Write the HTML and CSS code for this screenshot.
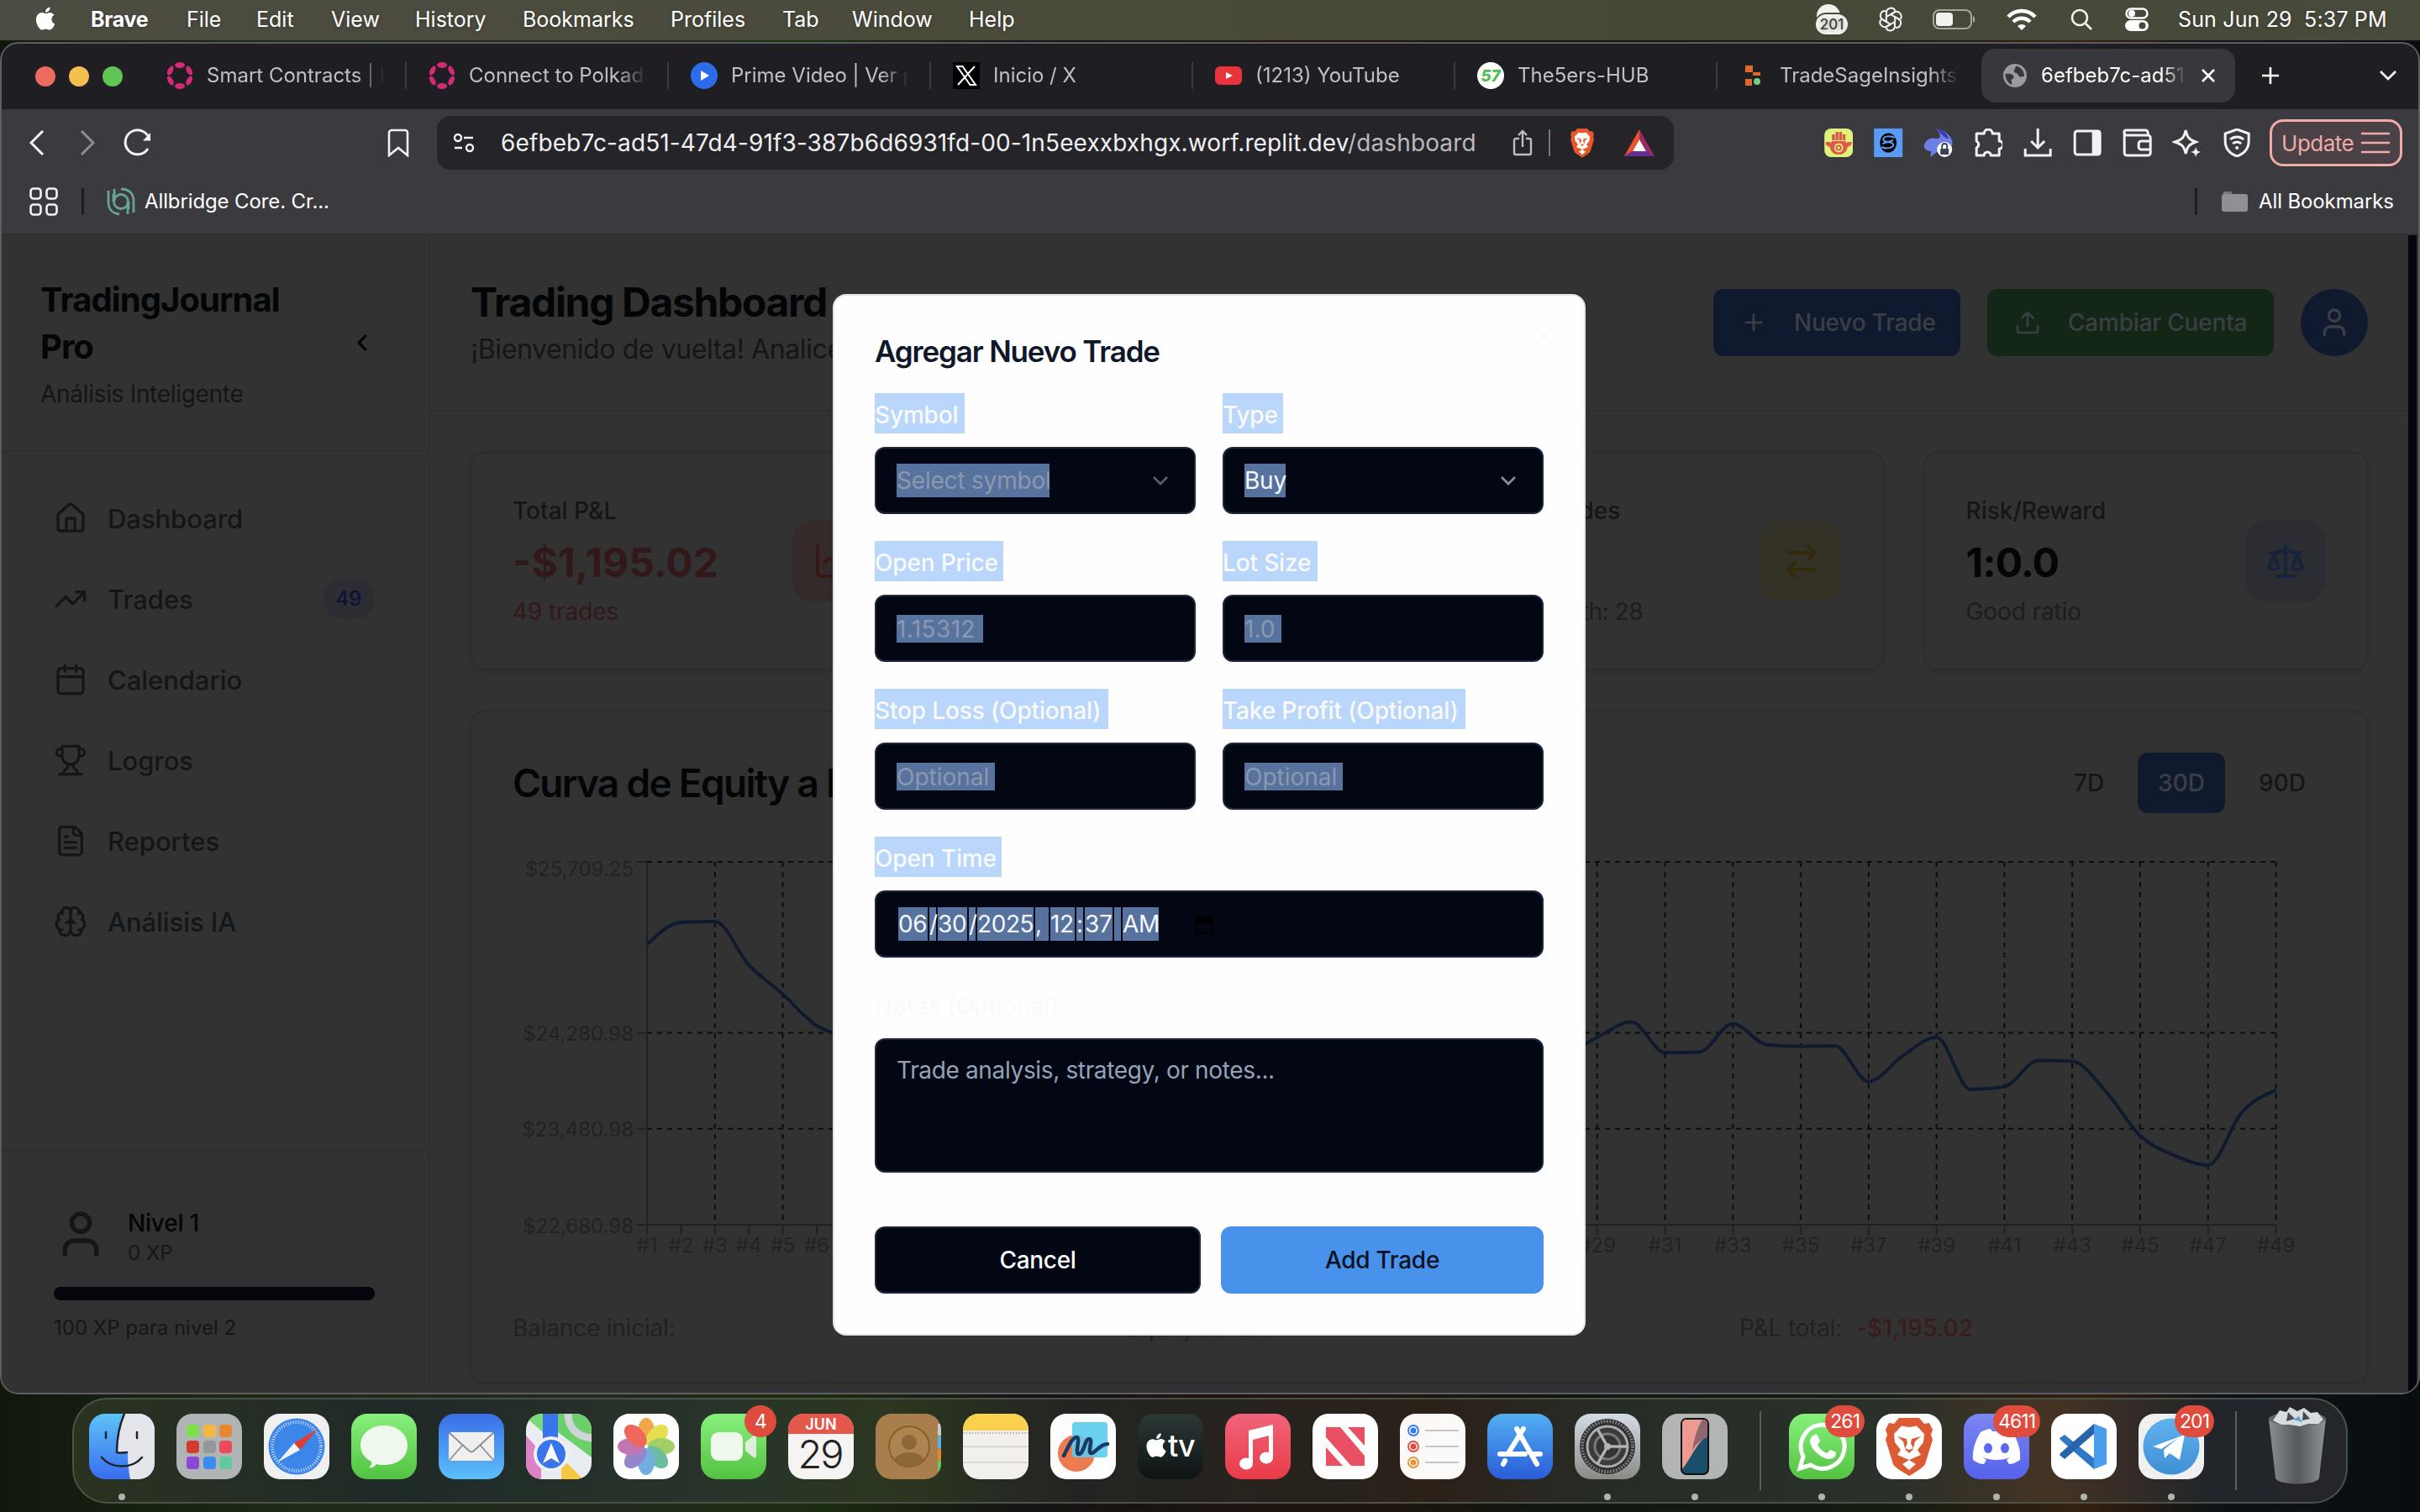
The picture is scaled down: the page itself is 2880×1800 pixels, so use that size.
FILE: index.html
```html
<!DOCTYPE html>
<html lang="es">
<head>
<meta charset="utf-8">
<title>TradingJournal Pro</title>
<link rel="stylesheet" href="styles.css">
</head>
<body>
<svg class="defs" width="0" height="0" aria-hidden="true">
  <defs>
    <symbol id="apple" viewBox="0 0 24 24"><path d="M17.3 12.7c0-2.4 2-3.6 2.1-3.700-1.200-1.700-2.900-1.900-3.500-2-1.500-.1-2.900.9-3.700.9-.8 0-1.900-.9-3.200-.8-1.600 0-3.100.9-4 2.400-1.700 2.900-.4 7.300 1.200 9.700.8 1.200 1.800 2.500 3 2.400 1.200 0 1.700-.8 3.200-.8s1.900.8 3.200.8c1.300 0 2.200-1.200 3-2.300.9-1.400 1.300-2.700 1.300-2.800-.1 0-2.600-1-2.600-3.800zM14.900 5.500c.7-.8 1.100-1.900 1-3.100-1 0-2.200.7-2.800 1.500-.6.7-1.200 1.800-1 2.900 1.100.1 2.200-.5 2.800-1.300z"/></symbol>
    <symbol id="polka" viewBox="0 0 32 32"><g fill="#d52a77"><ellipse cx="16" cy="3.500" rx="6" ry="3.500"/><ellipse cx="16" cy="28.500" rx="6" ry="3.500"/><ellipse cx="4.800" cy="10" rx="3" ry="6" transform="rotate(28 4.800 10)"/><ellipse cx="27.200" cy="10" rx="3" ry="6" transform="rotate(-28 27.200 10)"/><ellipse cx="4.800" cy="22" rx="3" ry="6" transform="rotate(-28 4.800 22)"/><ellipse cx="27.200" cy="22" rx="3" ry="6" transform="rotate(28 27.200 22)"/></g></symbol>
    <symbol id="lion" viewBox="0 0 32 36"><path d="M10 1h12l3 3.500 3-.5 2 4-1 3 1 3-4.500 14.500c-.5 1.500-6 5-9.500 7-3.500-2-9-5.500-9.500-7L2 14l1-3-1-3 2-4 3 .5z"/><path fill="#fff" d="M16 6.500l4.500-.8 4.500 4.800-.5 5-3.500 4.500 2 3-7 3-7-3 2-3L7.500 15.500l-.5-5 4.500-4.800zM16 26l4 2.500-4 3.500-4-3.500z"/><path d="M9 12l5.500 1.500.5 2.500-1.500 3.500L16 22l2.500-2.500L17 16l.5-2.500L23 12l-3.500 3L18.500 19 16 20l-2.500-1L12.500 15z"/></symbol>
    <symbol id="user" viewBox="0 0 24 24"><path d="M19 21v-2a4 4 0 0 0-4-4H9a4 4 0 0 0-4 4v2"/><circle cx="12" cy="7" r="4"/></symbol>
    <symbol id="chev" viewBox="0 0 24 24"><path d="m6 9 6 6 6-6"/></symbol>
  </defs>
</svg>

<div class="desktop">
  <header class="menubar">
    <svg class="apple"><use href="#apple"/></svg>
    <nav class="menus">
      <span class="app">Brave</span><span>File</span><span>Edit</span><span>View</span><span>History</span><span>Bookmarks</span><span>Profiles</span><span>Tab</span><span>Window</span><span>Help</span>
    </nav>
    <div class="status">
      <svg viewBox="0 0 40 36" width="40" height="36"><circle cx="16" cy="14" r="14" fill="#f1f1ee"/><rect x="0" y="10" width="40" height="26" rx="13" fill="#4a4b3d"/><rect x="1" y="12" width="38" height="24" rx="12" fill="#f1f1ee"/><text x="20" y="30" text-anchor="middle" class="tray">201</text></svg>
      <svg class="line knot" viewBox="0 0 30 30" width="30" height="30"><path id="petal" d="M10 12V7a5.500 5.500 0 0 1 10.500-2.200M10 12l5-2.900 6-3.400"/><use href="#petal" transform="rotate(60 15 15)"/><use href="#petal" transform="rotate(120 15 15)"/><use href="#petal" transform="rotate(180 15 15)"/><use href="#petal" transform="rotate(240 15 15)"/><use href="#petal" transform="rotate(300 15 15)"/></svg>
      <svg viewBox="0 0 52 24" width="52" height="24"><rect x="1" y="1" width="45" height="22" rx="7" fill="none" stroke="#a5a69c" stroke-width="2"/><rect x="4" y="4" width="20" height="16" rx="4" fill="#f1f1ee"/><path d="M48 8c3 1 3 7 0 8z" fill="#a5a69c"/></svg>
      <svg viewBox="0 0 36 26" width="36" height="26" fill="none" stroke="#fff" stroke-width="4.500"><path d="M2 10a22 22 0 0 1 32 0"/><path d="M8 16a14 14 0 0 1 20 0"/><path d="M18 26l-5-5a7 7 0 0 1 10 0z" fill="#fff" stroke="none"/></svg>
      <svg class="line search" viewBox="0 0 28 28" width="28" height="28"><circle cx="12" cy="12" r="9"/><path d="M19 19l7 7"/></svg>
      <svg viewBox="0 0 28 28" width="28" height="28"><rect x="1.500" y="1.500" width="25" height="11" rx="5.500" fill="none" stroke="#fff" stroke-width="2.400"/><circle cx="8" cy="7" r="4" fill="#fff"/><rect x="0" y="15" width="28" height="13" rx="6.500" fill="#fff"/><circle cx="20.500" cy="21.500" r="4" fill="#474839"/></svg>
      <span class="clock">Sun Jun 29&nbsp; 5:37 PM</span>
    </div>
  </header>

  <main class="window">
    <div class="tabs">
      <div class="lights"><i class="red"></i><i class="amber"></i><i class="green"></i></div>
      <div class="tab"><svg><use href="#polka"/></svg><span>Smart Contracts | Polkadot</span></div>
      <div class="tab"><svg><use href="#polka"/></svg><span>Connect to Polkadot</span></div>
      <div class="tab"><svg viewBox="0 0 32 32"><circle cx="16" cy="16" r="16" fill="#2d6be8"/><path d="M12 10l10 6-10 6z" fill="#fff"/></svg><span>Prime Video | Ver películas</span></div>
      <div class="tab"><svg viewBox="0 0 32 32"><path d="M0 0h32v32H0z"/><path d="M5 5h6.500L27 27h-6.500zM26 5L6 27" fill="none" stroke="#fff" stroke-width="2"/></svg><span>Inicio / X</span></div>
      <div class="tab"><svg viewBox="0 0 32 32"><rect y="5" width="32" height="22" rx="6" fill="#e8333c"/><path d="M13 12l8 4-8 4z" fill="#fff"/></svg><span>(1213) YouTube</span></div>
      <div class="tab"><svg viewBox="0 0 32 32"><circle cx="16" cy="16" r="16" fill="#fff"/><text x="16" y="23" text-anchor="middle" class="five">57</text></svg><span>The5ers-HUB</span></div>
      <div class="tab last"><svg viewBox="0 0 32 32"><path d="M7 4h9v8h9v4h-9v-4H7zM7 20h8v8H7z" fill="#e2672c"/><circle cx="21" cy="23" r="4" fill="#76cf80"/></svg><span>TradeSageInsights</span></div>
      <div class="tab active"><svg viewBox="0 0 32 32"><circle cx="16" cy="16" r="14" fill="#9a9ba0"/><path d="M4.500 14c6-1 11 1 10 5l-3 2 1 6c-5-2-8-7-8-13zM17 4.500c0 3-3 4-2 7 1 2 4 1 5 4s4 2 7 1c0-6-4-11-10-12z" fill="#38373c"/></svg><span>6efbeb7c-ad51-47d4</span><svg class="close" viewBox="0 0 16 16"><path d="M1 1l14 14M15 1L1 15"/></svg></div>
      <svg class="plus" viewBox="0 0 20 20"><path d="M10 0v20M0 10h20"/></svg>
      <svg class="more" viewBox="0 0 20 12"><path d="M1 1l9 9 9-9"/></svg>
    </div>

    <div class="toolbar">
      <svg class="line back" viewBox="0 0 18 30"><path d="M16 1L2 15l14 14"/></svg>
      <svg class="line fwd" viewBox="0 0 18 30"><path d="M2 1l14 14L2 29"/></svg>
      <svg class="line reload" viewBox="0 0 34 34"><path d="M29 24A14.500 14.500 0 1 1 31 14"/><path d="M32 5v9.500h-9z" fill="#f2f2f4" stroke="none"/></svg>
      <svg class="line mark" viewBox="0 0 26 34"><path d="M2 5a3 3 0 0 1 3-3h16a3 3 0 0 1 3 3v27l-11-9-11 9z"/></svg>
      <div class="url">
        <svg class="line tune" viewBox="0 0 26 24"><circle cx="6" cy="6" r="4"/><path d="M13 6h11M2 18h9"/><circle cx="20" cy="18" r="4"/></svg>
        <span class="addr">6efbeb7c-ad51-47d4-91f3-387b6d6931fd-00-1n5eexxbxhgx.worf.replit.dev<em>/dashboard</em></span>
        <svg class="share" viewBox="0 0 24 32"><path d="M8 11H4a2 2 0 0 0-2 2v15a2 2 0 0 0 2 2h16a2 2 0 0 0 2-2V13a2 2 0 0 0-2-2h-4M12 21V2M7 7l5-5 5 5"/></svg>
        <i class="bar"></i>
        <svg class="shield" fill="#e8582a"><use href="#lion"/></svg>
        <svg class="bat" viewBox="0 0 36 32"><path d="M18 0L0 32l9-5 9-15z" fill="#f0502c"/><path d="M18 0l18 32-9-5-9-15z" fill="#9c2a63"/><path d="M0 32h36l-9-6H9z" fill="#662d91"/><path d="M18 12l8 14H10z" fill="#fff"/></svg>
      </div>
      <div class="exts">
        <svg viewBox="0 0 34 34"><rect width="34" height="34" rx="8" fill="#dff27a"/><path d="M1.500 16h4c1 0 2 1 3 1v-2h17v2c1 0 2-1 3-1h4c0 4-2 5-5 6-1 6-5 9-10.500 9S7.500 28 6.500 22c-3-1-5-2-5-6zM9 14V7h3.500v7zM13.300 14V4h3.400v10zM17.500 14V4h3.400v10zM21.700 14V7h3.400v7z" fill="#e0574c"/><circle cx="17" cy="23" r="4.500" fill="none" stroke="#dff27a" stroke-width="1.800"/><circle cx="17" cy="23" r="1.800" fill="#dff27a"/></svg>
        <svg viewBox="0 0 34 34"><path d="M0 0h34v34H0z" fill="#5a9cf5"/><ellipse cx="17" cy="17" rx="10" ry="11.500"/><path d="M25 11c-5-3-14-2-14 2s11 2 12 6-8 6-14 3M10 18l13-4" fill="none" stroke="#5a9cf5" stroke-width="2"/></svg>
        <svg viewBox="0 0 34 34"><path d="M15 1c10 0 17 7 19 14 1 6-2 9-6 10l-12 3-8 6 1-7c-8 0-10-6-7-10 3-6 9-6 15-5l2-1c2-4-1-7-4-10z" fill="#6f7ee6"/><path d="M14 0c8 1 14 5 16 12-7-1-9-7-16-12z" fill="#3c37b8"/><circle cx="25" cy="25" r="9" fill="#fff"/><path d="M20 24h10v7H20z" fill="#3b4256"/><path d="M22 24v-3a3 3 0 0 1 6 0v3" fill="none" stroke="#3b4256" stroke-width="1.800"/></svg>
        <svg class="line" viewBox="0 0 34 34"><path d="M3 6h9a5 5 0 0 1 10 0h8v9a4 4 0 0 1 0 9v8H20a4 4 0 0 0-8 0H3v-9a4.500 4.500 0 0 0 0-8z" stroke-linejoin="round"/></svg>
        <svg class="line" viewBox="0 0 34 34"><path d="M17 0v22M9 15l8 8 8-8M2 24v8h30v-8"/></svg>
        <svg class="line" viewBox="0 0 34 34"><rect x="2" y="3" width="30" height="28" rx="3"/><path d="M24 4h7v26h-7z" fill="#f2f2f4"/></svg>
        <svg class="line" viewBox="0 0 34 34"><path d="M30 8V5a3 3 0 0 0-3-3H4a2 2 0 0 0-2 3c0 2 1 3 3 3h25a3 3 0 0 1 3 3v18a3 3 0 0 1-3 3H5a3 3 0 0 1-3-3V5M33 15H22a3 3 0 0 0-3 3v4a3 3 0 0 0 3 3h11"/></svg>
        <svg class="line" viewBox="0 0 34 34"><path d="M16 2c2 9 4 11 12 14-8 3-10 5-12 14-2-9-4-11-13-14 9-3 11-5 13-14z"/><path d="M28 22c1 4 2 5 6 6-4 1-5 2-6 6-1-4-2-5-6-6 4-1 5-2 6-6z" fill="#f2f2f4" stroke="none"/></svg>
        <svg class="line" viewBox="0 0 34 34"><path d="M17 1l14 5v9c0 9-6 15-14 18C9 30 3 24 3 15V6z"/><path d="M9 13a12 12 0 0 1 16 0M12 18a7 7 0 0 1 10 0"/><circle cx="17" cy="23" r="2" fill="#f2f2f4" stroke="none"/></svg>
        <div class="update"><span>Update</span><svg viewBox="0 0 34 26"><path d="M0 2h34M0 13h34M0 24h34"/></svg></div>
      </div>
    </div>

    <div class="bookmarks">
      <svg class="line apps" viewBox="0 0 34 34"><rect x="1.500" y="1.500" width="12" height="12" rx="3.500"/><rect x="20.500" y="1.500" width="12" height="12" rx="3.500"/><rect x="1.500" y="20.500" width="12" height="12" rx="3.500"/><rect x="20.500" y="20.500" width="12" height="12" rx="3.500"/></svg>
      <i></i>
      <svg class="bridge" viewBox="0 0 34 34"><g fill="none" stroke="#6aa294" stroke-width="2.800"><path d="M2 4v14c0 8 5 13 13 14M9 2v14M32 30V16C32 8 27 2 17 2M25 32V17"/><circle cx="17" cy="17" r="8.500"/><path d="M8 8v9M26 17v9"/></g></svg>
      <span class="b1">Allbridge Core. Cr...</span>
      <i class="right"></i>
      <svg class="folder" viewBox="0 0 32 26"><path d="M2 1h9l2 3H2z" fill="#77787c"/><rect x="0" y="4" width="31" height="21" rx="3" fill="#8f9096"/></svg>
      <span class="b2">All Bookmarks</span>
    </div>

    <div class="page">
      <aside class="side">
        <div class="brand"><div><h1>TradingJournal<br>Pro</h1><p>Análisis Inteligente</p></div><svg class="ico" viewBox="0 0 24 24"><path d="m15 18-6-6 6-6"/></svg></div>
        <nav class="nav">
          <a><svg class="ico" viewBox="0 0 24 24"><path d="M15 21v-8a1 1 0 0 0-1-1h-4a1 1 0 0 0-1 1v8M3 10a2 2 0 0 1 .709-1.528l7-5.999a2 2 0 0 1 2.582 0l7 5.999A2 2 0 0 1 21 10v9a2 2 0 0 1-2 2H5a2 2 0 0 1-2-2z"/></svg><span>Dashboard</span></a>
          <a><svg class="ico" viewBox="0 0 24 24"><path d="M22 7l-8.500 8.500-5-5L2 17M16 7h6v6"/></svg><span>Trades</span><b>49</b></a>
          <a><svg class="ico" viewBox="0 0 24 24"><path d="M8 2v4M16 2v4M3 10h18"/><rect x="3" y="4" width="18" height="18" rx="2"/></svg><span>Calendario</span></a>
          <a><svg class="ico" viewBox="0 0 24 24"><path d="M6 9H4.500a2.500 2.500 0 0 1 0-5H6M18 9h1.500a2.500 2.500 0 0 0 0-5H18M4 22h16M10 14.660V17c0 .550-.470.980-.970 1.210C7.850 18.750 7 20.240 7 22M14 14.660V17c0 .550.470.980.970 1.210C16.150 18.750 17 20.240 17 22M18 2H6v7a6 6 0 0 0 12 0V2Z"/></svg><span>Logros</span></a>
          <a><svg class="ico" viewBox="0 0 24 24"><path d="M15 2H6a2 2 0 0 0-2 2v16a2 2 0 0 0 2 2h12a2 2 0 0 0 2-2V7ZM14 2v4a2 2 0 0 0 2 2h4M10 9H8M16 13H8M16 17H8"/></svg><span>Reportes</span></a>
          <a><svg class="ico" viewBox="0 0 24 24"><path d="M12 5a3 3 0 1 0-5.997.125 4 4 0 0 0-2.526 5.770 4 4 0 0 0 .556 6.588A4 4 0 1 0 12 18ZM12 5a3 3 0 1 1 5.997.125 4 4 0 0 1 2.526 5.770 4 4 0 0 1-.556 6.588A4 4 0 1 1 12 18ZM15 13a4.500 4.500 0 0 1-3-4 4.500 4.500 0 0 1-3 4M17.599 6.500a3 3 0 0 0 .399-1.375M6.003 5.125A3 3 0 0 0 6.401 6.500M3.477 10.896a4 4 0 0 1 .585-.396M19.938 10.500a4 4 0 0 1 .585.396M6 18a4 4 0 0 1-1.967-.516M19.967 17.484A4 4 0 0 1 18 18"/></svg><span>Análisis IA</span></a>
        </nav>
        <div class="level">
          <div class="box">
            <div class="who"><svg class="ico"><use href="#user"/></svg><div><strong>Nivel 1</strong><small>0 XP</small></div></div>
            <div class="track"></div>
            <small class="next">100 XP para nivel 2</small>
          </div>
        </div>
      </aside>

      <section class="content">
        <div class="top">
          <div class="headline"><h2>Trading Dashboard</h2><p>¡Bienvenido de vuelta! Analice</p></div>
          <button class="btn blue"><svg class="ico" viewBox="0 0 24 24"><path d="M5 12h14M12 5v14"/></svg><span>Nuevo Trade</span></button>
          <button class="btn green"><svg class="ico" viewBox="0 0 24 24"><path d="M21 15v4a2 2 0 0 1-2 2H5a2 2 0 0 1-2-2v-4M17 8l-5-5-5 5M12 3v12"/></svg><span>Cambiar Cuenta</span></button>
          <div class="avatar"><svg class="ico"><use href="#user"/></svg></div>
        </div>
        <div class="body">
          <div class="stats">
            <div class="card stat neg"><div><h4>Total P&amp;L</h4><strong>-$1,195.02</strong><p>49 trades</p></div><i class="tile"><svg class="ico" viewBox="0 0 24 24"><path d="M3 3v16a2 2 0 0 0 2 2h16M19 9l-5 5-4-4-3 3"/></svg></i></div>
            <div class="card stat"></div>
            <div class="card stat wide"><div><h4>Total Trades</h4><strong>49</strong><p>This month: 28</p></div><i class="tile gold"><svg class="ico" viewBox="0 0 24 24"><path d="M16 3l4 4-4 4M20 7H4M8 21l-4-4 4-4M4 17h16"/></svg></i></div>
            <div class="card stat"><div><h4>Risk/Reward</h4><strong>1:0.0</strong><p>Good ratio</p></div><i class="tile sky"><svg class="ico" viewBox="0 0 24 24"><path d="M16 16l3-8 3 8c-.870.650-1.920 1-3 1s-2.130-.350-3-1ZM2 16l3-8 3 8c-.870.650-1.920 1-3 1s-2.130-.350-3-1ZM7 21h10M12 3v18M3 7h2c2 0 5-1 7-2 2 1 5 2 7 2h2"/></svg></i></div>
          </div>
          <div class="card equity">
            <div class="eqhead"><h3>Curva de Equity a lo</h3><div class="ranges"><span>7D</span><span class="on">30D</span><span>90D</span></div></div>
            <svg id="chart" width="2158" height="500" viewBox="610 1000 2158 500"></svg>
            <div class="totals"><span>Balance inicial:</span><span>Equity actual:</span><span>P&amp;L total: <b>-$1,195.02</b></span></div>
          </div>
        </div>
      </section>
      <div class="scroll"></div>

      <form class="modal">
        <h2>Agregar Nuevo Trade</h2>
        <svg class="x" viewBox="0 0 18 18"><path d="M1 1l16 16M17 1L1 17"/></svg>
        <div class="grid">
          <div><label><mark style="width:107px">Symbol</mark></label><div class="input"><mark style="width:182px">Select symbol</mark><svg class="caret dim"><use href="#chev"/></svg></div></div>
          <div><label><mark style="width:72px">Type</mark></label><div class="input"><mark class="val" style="width:49px">Buy</mark><svg class="caret"><use href="#chev"/></svg></div></div>
          <div><label><mark style="width:153px">Open Price</mark></label><div class="input low num"><mark style="width:103px">1.15312</mark></div></div>
          <div><label><mark style="width:113px">Lot Size</mark></label><div class="input low"><mark style="width:44px">1.0</mark></div></div>
          <div><label><mark style="width:278px">Stop Loss (Optional)</mark></label><div class="input low"><mark style="width:117px">Optional</mark></div></div>
          <div><label><mark style="width:289px">Take Profit (Optional)</mark></label><div class="input low"><mark style="width:117px">Optional</mark></div></div>
          <div class="full"><label><mark style="width:151px">Open Time</mark></label><div class="input date"><mark style="width:35px">06</mark><mark style="width:8px">/</mark><mark style="width:35px">30</mark><mark style="width:8px">/</mark><mark style="width:67px">2025</mark><mark style="width:16px">,</mark><mark style="width:29px">12</mark><mark style="width:8px">:</mark><mark style="width:33px">37</mark><mark style="width:8px"></mark><mark style="width:43px">AM</mark><svg class="cal" viewBox="0 0 22 24"><path d="M1 5h20v6H1zM4 1h3v4H4zM15 1h3v4h-3z"/><rect x="1.500" y="4.500" width="19" height="18" rx="2" fill="none" stroke="#000" stroke-width="2"/></svg></div></div>
          <div class="full"><label class="plain">Notes (Optional)</label><div class="input area">Trade analysis, strategy, or notes...</div></div>
        </div>
        <div class="actions"><span class="cancel">Cancel</span><span class="add">Add Trade</span></div>
      </form>
    </div>
  </main>

  <footer class="dock">
    <div class="app on"><svg viewBox="0 0 78 78"><linearGradient id="gf" x2="0" y2="1"><stop stop-color="#5cc3f7"/><stop offset="1" stop-color="#3a6df0"/></linearGradient><path d="M0 0h78v78H0z" fill="url(#gf)"/><path d="M42 0h36v78H49c-2-12-3-20-3-31H33C33 28 36 14 42 0z" fill="#e4e6ec"/><path d="M20 22v7M57 22v7M15 52c12 14 36 14 48 0M45 46c-2 0-12 1-12 0 0-18 3-32 9-46" fill="none" stroke="#1c2430" stroke-width="2.500" stroke-linecap="round"/></svg></div>
    <div class="app"><svg viewBox="0 0 78 78"><path d="M0 0h78v78H0z" fill="#b0b4b4"/><g><rect x="12" y="13" width="15" height="15" rx="4" fill="#7be04c"/><rect x="32" y="13" width="15" height="15" rx="4" fill="#f4b73f"/><rect x="51" y="13" width="15" height="15" rx="4" fill="#e8872f"/><rect x="12" y="32" width="15" height="15" rx="4" fill="#d43a2e"/><rect x="32" y="32" width="15" height="15" rx="4" fill="#94989c"/><rect x="51" y="32" width="15" height="15" rx="4" fill="#ef4a5c"/><rect x="12" y="51" width="15" height="15" rx="4" fill="#8b47d6"/><rect x="32" y="51" width="15" height="15" rx="4" fill="#3b8cf2"/><rect x="51" y="51" width="15" height="15" rx="4" fill="#63c99a"/></g></svg></div>
    <div class="app"><svg viewBox="0 0 78 78"><path d="M0 0h78v78H0z" fill="#f0f0f0"/><circle cx="39" cy="39" r="33.500" fill="#3c86ea"/><circle cx="39" cy="39" r="29" fill="none" stroke="#cfe3fb" stroke-width="4" stroke-dasharray="1 2"/><path d="M64 18L43 43l-7-8z" fill="#e23c30"/><path d="M16 58l20-23 7 8z" fill="#f1f3f6"/></svg></div>
    <div class="app"><svg viewBox="0 0 78 78"><linearGradient id="gg" x2="0" y2="1"><stop stop-color="#87f07c"/><stop offset="1" stop-color="#53c241"/></linearGradient><path d="M0 0h78v78H0z" fill="url(#gg)"/><path d="M39 14c16 0 28 10 28 24S55 61 39 61c-3 0-6 0-9-1-2 3-5 5-9 4 2-2 4-4 3-7-8-4-13-11-13-19 0-14 12-24 28-24z" fill="#eef8ec"/></svg></div>
    <div class="app"><svg viewBox="0 0 78 78"><linearGradient id="gm" x2="0" y2="1"><stop stop-color="#3a6ee8"/><stop offset="1" stop-color="#5cc0f8"/></linearGradient><path d="M0 0h78v78H0z" fill="url(#gm)"/><rect x="12" y="22" width="54" height="34" rx="4" fill="#f0efee"/><path d="M13 23l23 21c2 2 4 2 6 0l23-21M13 55l15-17M65 55L50 38" fill="none" stroke="#8c8f96" stroke-width="1.800"/></svg></div>
    <div class="app"><svg viewBox="0 0 78 78"><path d="M0 0h78v78H0z" fill="#e9ecf0"/><path d="M38 0h40v52L38 22z" fill="#6bd06a"/><path d="M0 0h20v22L4 8z" fill="#7ad878"/><path d="M0 26l18 20v32H0z" fill="#de82c8"/><path d="M42 78V52l26 26z" fill="#f5c842"/><path d="M50 0c0 16 10 28 30 29" fill="none" stroke="#d0d3d8" stroke-width="9"/><path d="M20 0h18v40H20z" fill="#3875ea"/><circle cx="30" cy="48" r="19" fill="#3875ea" stroke="#eef0f4" stroke-width="4"/><path d="M30 35l10 24-10-6-10 6z" fill="#fff"/></svg></div>
    <div class="app"><svg viewBox="0 0 78 78"><path d="M0 0h78v78H0z" fill="#fdfdfd"/><g class="petals"><ellipse cx="39" cy="21" rx="10" ry="16" fill="#f0a03a"/><ellipse cx="39" cy="21" rx="10" ry="16" fill="#e3dc3f" transform="rotate(45 39 39)"/><ellipse cx="39" cy="21" rx="10" ry="16" fill="#98cc58" transform="rotate(90 39 39)"/><ellipse cx="39" cy="21" rx="10" ry="16" fill="#5fb897" transform="rotate(135 39 39)"/><ellipse cx="39" cy="21" rx="10" ry="16" fill="#68a8e0" transform="rotate(180 39 39)"/><ellipse cx="39" cy="21" rx="10" ry="16" fill="#8d7cc8" transform="rotate(225 39 39)"/><ellipse cx="39" cy="21" rx="10" ry="16" fill="#bb6cab" transform="rotate(270 39 39)"/><ellipse cx="39" cy="21" rx="10" ry="16" fill="#ee5a4e" transform="rotate(315 39 39)"/></g></svg></div>
    <div class="app"><svg viewBox="0 0 78 78"><path d="M0 0h78v78H0z" fill="url(#gg)"/><rect x="12" y="22" width="38" height="34" rx="9" fill="#eef8ec"/><path d="M53 34l10-8c2-1 3 0 3 2v22c0 2-1 3-3 2l-10-8z" fill="#dcefd9"/></svg><b class="badge">4</b></div>
    <div class="app"><svg viewBox="0 0 78 78"><path d="M0 0h78v78H0z" fill="#f5f4f3"/><path d="M0 0h78v24H0z" fill="#e4584c"/><text x="39" y="19" text-anchor="middle" class="mon">JUN</text><text x="38" y="65" text-anchor="middle" class="day">29</text></svg></div>
    <div class="app"><svg viewBox="0 0 78 78"><path d="M0 0h78v78H0z" fill="#a87f4c"/><path d="M74 12h4v14h-4z" fill="#c9ccd0"/><path d="M74 27h4v14h-4z" fill="#58b2e6"/><path d="M74 42h4v13h-4z" fill="#e8862f"/><path d="M74 56h4v13h-4z" fill="#5fce58"/><circle cx="40" cy="39" r="24" fill="#ad8450" stroke="#84602f" stroke-width="2"/><circle cx="40" cy="34" r="9" fill="#8c6838"/><path d="M22 55c6-12 30-12 36 0-10 11-26 11-36 0z" fill="#8c6838"/></svg></div>
    <div class="app"><svg viewBox="0 0 78 78"><path d="M0 0h78v78H0z" fill="#f1f0ed"/><path d="M0 0h78v20H0z" fill="#f9d14c"/><path d="M0 39h78M0 58h78" stroke="#cfcfd2" stroke-width="1.500"/><path d="M0 23h78" stroke="#b5b3ac" stroke-width="2" stroke-dasharray="1.500 2"/></svg></div>
    <div class="app"><svg viewBox="0 0 78 78"><path d="M0 0h78v78H0z" fill="#fdfdfd"/><circle cx="31" cy="47" r="22" fill="#ee7a50"/><rect x="26" y="10" width="42" height="42" rx="4" fill="#5ccbf0" opacity=".9"/><path d="M16 50c5-10 10-22 15-22 6 0-3 20 3 20s7-18 12-18c6 0-3 17 3 17 5 0 8-10 19-11" fill="none" stroke="#173a66" stroke-width="4.500" stroke-linecap="round"/></svg></div>
    <div class="app"><svg viewBox="0 0 78 78"><linearGradient id="gt" x2="0" y2="1"><stop stop-color="#2b3836"/><stop offset="1" stop-color="#0e1314"/></linearGradient><path d="M0 0h78v78H0z" fill="url(#gt)"/><svg x="8" y="22" width="28" height="31" viewBox="3 1.500 18 21" fill="#fff"><use href="#apple" width="24" height="24"/></svg><text x="36" y="51" class="tv">tv</text></svg></div>
    <div class="app"><svg viewBox="0 0 78 78"><linearGradient id="gr" x2="0" y2="1"><stop stop-color="#f0647a"/><stop offset="1" stop-color="#e83c48"/></linearGradient><path d="M0 0h78v78H0z" fill="url(#gr)"/><path d="M28 20l29-7v39a8 7 0 1 1-5-6V26l-19 5v28a8 7 0 1 1-5-6z" fill="#fff"/></svg></div>
    <div class="app"><svg viewBox="0 0 78 78"><path d="M0 0h78v78H0z" fill="#fdfdfd"/><path d="M16 16h17l29 34v12H46L16 28zM42 16h20v22zM16 40l20 22H16z" fill="#ea5064"/></svg></div>
    <div class="app"><svg viewBox="0 0 78 78"><path d="M0 0h78v78H0z" fill="#fbfaf9"/><path d="M30 20h40M30 39h40M30 58h40" stroke="#b4b5b8" stroke-width="1.600"/><g stroke-width="1.800"><circle cx="16" cy="20" r="6" fill="#fff" stroke="#3478f6"/><circle cx="16" cy="20" r="3.500" fill="#3478f6"/><circle cx="16" cy="39" r="6" fill="#fff" stroke="#e5483c"/><circle cx="16" cy="39" r="3.500" fill="#e5483c"/><circle cx="16" cy="58" r="6" fill="#fff" stroke="#e89434"/><circle cx="16" cy="58" r="3.500" fill="#e89434"/></g></svg></div>
    <div class="app"><svg viewBox="0 0 78 78"><linearGradient id="ga" x2="0" y2="1"><stop stop-color="#52b0f2"/><stop offset="1" stop-color="#2a5cd8"/></linearGradient><path d="M0 0h78v78H0z" fill="url(#ga)"/><path d="M43 18L25 47M35 18l24 42M15 48h30M56 48h7M21 56l-2 4" stroke="#fff" stroke-width="6" stroke-linecap="round"/></svg></div>
    <div class="app on"><svg viewBox="0 0 78 78"><linearGradient id="gs" x2="0" y2="1"><stop stop-color="#d3dde4"/><stop offset="1" stop-color="#8c8a88"/></linearGradient><path d="M0 0h78v78H0z" fill="url(#gs)"/><circle cx="39" cy="39" r="33" fill="#2c2c2e"/><circle cx="39" cy="39" r="30" fill="none" stroke="#77787a" stroke-width="4" stroke-dasharray="2 1.500"/><circle cx="39" cy="39" r="24" fill="#3c3c3e" stroke="#a9abad" stroke-width="3"/><circle cx="39" cy="39" r="15" fill="#343436" stroke="#77797c" stroke-width="3"/><path d="M39 39h24M39 39L27 18M39 39L27 60" stroke="#b0b2b4" stroke-width="3.500"/><circle cx="39" cy="39" r="4" fill="#b0b2b4"/></svg></div>
    <div class="app on"><svg viewBox="0 0 78 78"><path d="M0 0h78v78H0z" fill="#b3b5b4"/><rect x="23" y="6" width="32" height="66" rx="6" fill="#1a4f6c" stroke="#111" stroke-width="2"/><path d="M24 12c0-3 2-5 5-5h20c3 0 5 2 5 5v14C40 36 34 54 24 66z" fill="#ee9a90"/><path d="M54 12v16c-8 3-14 8-18 16 2-14 6-28 12-37 4 0 6 2 6 5z" fill="#8d6670"/></svg></div>
    <i class="split"></i>
    <div class="app on"><svg viewBox="0 0 78 78"><path d="M0 0h78v78H0z" fill="url(#gg)"/><path d="M13 65l4-14a26 26 0 1 1 9 10z" fill="none" stroke="#fff" stroke-width="5"/><path d="M29 26c2-2 4-2 5 0l3 6c0 2-2 3-3 5 3 5 6 8 11 10 2-1 3-4 5-4l6 3c1 5-4 8-8 8-11-1-23-13-23-22 0-2 2-5 4-6z" fill="#fff"/></svg><b class="badge">261</b></div>
    <div class="app on"><svg viewBox="0 0 78 78"><path d="M0 0h78v78H0z" fill="#fff"/><svg x="7" y="3" width="64" height="72" fill="#dc5a34"><use href="#lion"/></svg></svg></div>
    <div class="app on"><svg viewBox="0 0 78 78"><linearGradient id="gd" x2="0" y2="1"><stop stop-color="#7a86f2"/><stop offset="1" stop-color="#5662ea"/></linearGradient><path d="M0 0h78v78H0z" fill="url(#gd)"/><path d="M20 22c4-2 8-4 12-4l2 3h10l2-3c4 0 8 2 12 4 7 11 10 22 9 33-5 3-9 5-13 5l-3-5 4-3c-9 4-23 4-32 0l4 3-3 5c-4 0-9-2-13-5-1-11 2-22 9-33z" fill="#fff"/><ellipse cx="29" cy="41" rx="5" ry="6" fill="#5c69ec"/><ellipse cx="49" cy="41" rx="5" ry="6" fill="#5c69ec"/></svg><b class="badge wide">4611</b></div>
    <div class="app on"><svg viewBox="0 0 78 78"><path d="M0 0h78v78H0z" fill="#fff"/><path d="M10 29l6-4 35 28v13L11 31z" fill="#2f78c8"/><path d="M10 49l6 5 35-30V12L11 47z" fill="#2864ac"/><path d="M51 12l15 6v42l-15 6z" fill="#4a9ced"/></svg></div>
    <div class="app on"><svg viewBox="0 0 78 78"><linearGradient id="ge" x2="0" y2="1"><stop stop-color="#60b2ee"/><stop offset="1" stop-color="#3f8fd4"/></linearGradient><path d="M0 0h78v78H0z" fill="#f0f0f0"/><circle cx="39" cy="39" r="33.500" fill="url(#ge)"/><path d="M17 39l38-14-6 30-12-8-6 6-1-10 17-14-20 13z" fill="#fff"/></svg><b class="badge">201</b></div>
    <i class="split two"></i>
    <div class="app trash"><svg viewBox="0 0 78 96"><linearGradient id="gx"><stop stop-color="#8a8e90"/><stop offset=".5" stop-color="#56595b"/><stop offset="1" stop-color="#8f9395"/></linearGradient><path d="M5 14h68l-8 70c-1 10-51 10-52 0z" fill="url(#gx)"/><ellipse cx="39" cy="14" rx="34" ry="8" fill="#5f6466"/><path d="M10 16l8-12 8 2 4-6 9 5 8-4 8 6 8-1 7 9-6 5-12 0-10 3-12-2-10 0z" fill="#d9dcde"/><path d="M28 6l8 8-10 3zM46 5l8 9-9 2z" fill="#454a58"/><path d="M34 15l7-4 4 7z" fill="#5fa5cc"/></svg></div>
  </footer>
</div>
<script src="chart.js"></script>
</body>
</html>
```

FILE: styles.css
```css
* { box-sizing: border-box; }
body { margin: 0; font-family: Inter, "Liberation Sans", sans-serif; background: #0c120c; }
h1, h2, h3, h4, p { margin: 0; font-weight: 400; }
i, em { font-style: normal; }
svg { display: block; flex: none; }
.defs { position: absolute; }
span, strong, b, small, a { white-space: nowrap; }
.line { fill: none; stroke: #f2f2f4; stroke-width: 3; }

.desktop { width: 2880px; height: 1800px; overflow: hidden; display: flex; flex-direction: column;
  background: linear-gradient(90deg, #10180c, #1d2a18 12%, #20281c 25%, #1c2c10 34%, #151414 42%, #20140e 56%, #10170f 64%, #141c12 78%, #35200f 86%, #0b1216 92%, #080d10); }

/* menu bar */
.menubar { height: 48px; flex: none; display: flex; align-items: center; background: linear-gradient(90deg, #4c4c42, #4a4b3b 40%, #454737 70%, #484a3c); color: #fff; font-size: 25px; text-shadow: 0 1px 4px rgba(0,0,0,.3); }
.apple { width: 34px; height: 34px; margin-left: 37px; margin-top: -4px; fill: #fff; }
.menus { margin: -2px 0 0 37px; display: grid; grid-template-columns: 114px 83px 89px 100px 128px 176px 133px 83px 139px 60px; }
.menus .app { font-weight: 700; letter-spacing: -.3px; }
.status { margin: -2px 38px 0 auto; display: grid; grid-template-columns: 75px 65px 88px 75px 66px 63px 250px; align-items: center; }
.knot { stroke-width: 2; }
.search { stroke-width: 2.600; }
.tray { font-size: 17px; font-weight: 500; fill: #3f4033; }
.clock { letter-spacing: .15px; }

/* browser window */
.window { height: 1610px; margin-top: 2px; flex: none; border: 2px solid #5e5e62; border-radius: 22px; overflow: hidden; display: flex; flex-direction: column; background: #323232; }
.tabs { height: 78px; padding-bottom: 2px; flex: none; background: #1f1e23; display: flex; align-items: center; }
.lights { width: 170px; padding: 2px 0 0 40px; display: flex; gap: 16px; flex: none; }
.lights i { width: 24px; height: 24px; border-radius: 50%; }
.red { background: #ec6a5e; } .amber { background: #f4bf4f; } .lights .green { background: #61c554; }
.tab { width: 312px; height: 32px; padding: 0 20px 0 26px; display: flex; align-items: center; gap: 16px; border-right: 2px solid #3c3b40; flex: none; color: #c0c0c4; font-size: 24px; }
.tab svg { width: 32px; height: 32px; }
.tab span { flex: 1; overflow: hidden; margin-top: -1px; letter-spacing: 0; -webkit-mask-image: linear-gradient(90deg, #000 82%, transparent 98%); mask-image: linear-gradient(90deg, #000 82%, transparent 98%); }
.tab.last { border: 0; }
.tab.active { width: 302px; height: 64px; margin-left: 2px; padding: 0 24px; border: 0; border-radius: 16px; background: #38373c; color: #fff; gap: 15px; }
.tab .close { width: 16px; height: 16px; }
.close path, .plus path, .more path { fill: none; stroke: #fff; stroke-width: 2.600; }
.plus { width: 20px; height: 20px; margin-left: 32px; }
.more { width: 20px; height: 12px; margin-left: 120px; }
.five { font-size: 19px; font-weight: 800; font-style: italic; fill: #4fc050; }

.toolbar { height: 80px; flex: none; background: #3b3a3f; display: flex; align-items: center; }
.back { width: 18px; height: 30px; margin-left: 33px; }
.fwd { width: 18px; height: 30px; margin-left: 42px; opacity: .45; }
.reload { width: 34px; height: 34px; margin-left: 34px; }
.mark { width: 26px; height: 34px; margin-left: 280px; stroke-width: 2.600; }
.url { width: 1472px; height: 64px; margin-left: 33px; padding-left: 19px; border-radius: 16px; background: #252429; display: flex; align-items: center; }
.tune { width: 26px; height: 24px; stroke-width: 2.400; }
.addr { width: 1204px; margin-left: 31px; font-size: 28px; letter-spacing: .12px; color: #f0f0f2; }
.addr em { color: #b9b9be; }
.share { width: 24px; height: 32px; fill: none; stroke: #bdbdc2; stroke-width: 2.400; }
.bar { width: 2px; height: 32px; margin-left: 19px; background: #77767c; }
.shield { width: 32px; height: 36px; margin-left: 22px; }
.bat { width: 36px; height: 32px; margin-left: 34px; }
.exts { margin-left: 179px; display: flex; align-items: center; gap: 24.800px; }
.exts > svg { width: 34.400px; height: 34px; }
.update { width: 158px; height: 56px; margin-left: -3px; border: 3px solid #f0aca8; border-radius: 16px; background: #4a4246; color: #f0aca8; display: flex; align-items: center; justify-content: center; gap: 9px; font-size: 26px; letter-spacing: -.5px; }
.update svg { width: 34px; height: 26px; stroke: #f0aca8; stroke-width: 2.600; }

.bookmarks { height: 70px; flex: none; padding-bottom: 9px; background: #3b3a3f; border-bottom: 2px solid #302f33; display: flex; align-items: center; color: #fff; font-size: 24px; letter-spacing: -.12px; }
.apps { width: 34px; height: 34px; margin-left: 33px; stroke-width: 2.600; }
.bookmarks i { width: 3px; height: 32px; margin-left: 28px; background: #1d1c20; }
.bridge { width: 34px; height: 34px; margin-left: 27px; }
.b1 { margin-left: 11px; width: 224px; }
.bookmarks .right { margin-left: auto; }
.folder { width: 32px; height: 26px; margin-left: 29px; }
.b2 { width: 160px; margin: 0 30px 0 12px; }

/* dimmed page */
.page { height: 1378px; display: flex; position: relative; background: #323232; color: #131618; }
.ico { width: 40px; height: 40px; fill: none; stroke: currentColor; stroke-width: 2; stroke-linecap: round; stroke-linejoin: round; }
.side { width: 510px; flex: none; border-right: 2px solid #2d2d2e; display: flex; flex-direction: column; }
.brand { height: 258px; padding: 49px 62px 0 46px; border-bottom: 2px solid #2d2d2e; display: flex; justify-content: space-between; }
.brand h1 { font-size: 40px; line-height: 56px; font-weight: 700; color: #030507; letter-spacing: -.95px; }
.brand p { margin-top: 8px; font-size: 28px; line-height: 40px; letter-spacing: -.3px; }
.brand svg { width: 32px; height: 32px; margin: 63px 1px 0 0; color: #030507; stroke-width: 2.400; }
.nav { padding: 31px 64px 0 62px; }
.nav a { height: 96px; display: flex; align-items: center; gap: 24px; font-size: 31px; font-weight: 500; letter-spacing: -.05px; }
.nav b { margin-left: auto; width: 62px; height: 48px; border-radius: 24px; background: #2b2d33; color: #0b1138; font-size: 24px; font-weight: 500; line-height: 48px; text-align: center; }
.level { margin-top: auto; height: 289px; padding: 32px 32px 0 30px; border-top: 2px solid #2d2d2e; }
.box { height: 224px; padding: 34px 32px; border-radius: 16px; background: #313131; }
.who { display: flex; gap: 24px; }
.who svg { width: 64px; height: 64px; }
.who strong, .who small, .next { display: block; }
.who strong { font-size: 28px; line-height: 40px; margin-top: -1px; font-weight: 500; color: #030507; letter-spacing: -.2px; }
.level small { font-size: 24px; line-height: 32px; }
.track { height: 16px; margin: 24px 0 17px; border-radius: 8px; background: #04060c; }

.content { width: 2354px; flex: none; }
.top { height: 210px; padding: 0 48px; border-bottom: 2px solid #2d2d2e; display: flex; align-items: center; }
.headline { flex: 1; }
.top h2 { font-size: 48px; line-height: 64px; font-weight: 700; color: #030507; letter-spacing: -1.350px; }
.top p { font-size: 32px; line-height: 48px; letter-spacing: -.4px; }
.btn { height: 80px; border: 0; border-radius: 12px; margin-right: 32px; padding: 0 32px; display: flex; align-items: center; gap: 32px; font: 500 28px Inter, sans-serif; letter-spacing: -.2px; color: #3b3f45; }
.btn svg { width: 32px; height: 32px; }
.blue { width: 294px; background: #101a2f; } .green.btn { width: 341px; background: #142716; }
.avatar { width: 80px; height: 80px; border-radius: 50%; background: #101a2f; color: #3b3f45; padding: 20px; }

.body { padding: 48px 48px 0; }
.stats { display: grid; grid-template-columns: repeat(4, 1fr); gap: 48px; }
.card { border: 2px solid #2d2d2e; border-radius: 16px; box-shadow: 0 2px 4px rgba(0,0,0,.08); }
.stat { height: 260px; padding: 48px; display: flex; justify-content: space-between; align-items: center; }
.stat h4 { font-size: 28px; line-height: 40px; font-weight: 500; }
.stat strong { display: block; margin: 10px 0 6px; font-size: 48px; line-height: 64px; font-weight: 700; letter-spacing: 0; color: #030507; }
.stat:last-child strong { letter-spacing: -.8px; }
.stat p { font-size: 28px; line-height: 40px; letter-spacing: -.1px; color: #1b1d20; }
.stat.wide p { letter-spacing: -.4px; }
.neg strong, .stat.neg p { color: #321818; }
.tile { width: 96px; height: 96px; border-radius: 24px; display: grid; place-items: center; background: #342a2a; color: #3a1717; }
.tile svg { width: 48px; height: 48px; }
.tile.gold { background: #343127; color: #332a0d; }
.tile.sky { background: #2b2d33; color: #172338; }
.equity { height: 801px; margin-top: 48px; padding: 48px; }
.eqhead { height: 72px; display: flex; justify-content: space-between; align-items: center; }
.eqhead h3 { font-size: 46px; font-weight: 600; letter-spacing: -1.700px; color: #030507; }
.ranges { display: flex; gap: 16px; }
.ranges span { width: 104px; height: 72px; border-radius: 12px; line-height: 72px; text-align: center; font-size: 28px; font-weight: 500; }
.ranges span:first-child { width: 84px; }
.ranges .on { background: #101a2f; color: #3b3f45; }
#chart { margin-top: 32px; }
#chart text { font-size: 24px; fill: #212224; }
.totals { margin-top: 61px; display: grid; grid-template-columns: repeat(3, 1fr); gap: 32px; font-size: 28px; line-height: 40px; letter-spacing: -.2px; color: #202124; }
.totals b { margin-left: 9px; font-weight: 500; letter-spacing: .2px; color: #3a1b1b; }
.scroll { width: 10px; background: #04060c; }

/* dialog */
.modal { position: absolute; left: 989px; top: 70px; width: 896px; height: 1240px; padding: 48px; border: 2px solid #e2e5ea; border-radius: 16px; background: #fefefe; }
.modal h2 { font-size: 35px; line-height: 36px; font-weight: 600; letter-spacing: -1.150px; color: #0f172a; }
.x { position: absolute; right: 39px; top: 39px; width: 18px; height: 18px; stroke: #f6f8fa; stroke-width: 2; }
.grid { margin-top: 32px; display: grid; grid-template-columns: 1fr 1fr; gap: 32px; }
.full { grid-column: 1 / -1; }
.modal label { display: block; height: 48px; margin-bottom: 16px; font-size: 28px; line-height: 53px; font-weight: 500; color: #f8fafc; }
mark { display: block; flex: none; background: #bad6fb; color: #f8fafc; white-space: nowrap; }
label mark { height: 48px; letter-spacing: -.15px; }
.input { height: 80px; padding: 0 24px; border: 2px solid #1e293b; border-radius: 12px; background: #020713; display: flex; align-items: center; font-size: 28px; }
.input mark { height: 40px; line-height: 40px; letter-spacing: -.2px; background: #56729d; color: #8b99b0; }
.low mark { height: 33px; line-height: 35px; letter-spacing: 0; }
.num mark { letter-spacing: .4px; }
.input .val, .date mark { color: #f4f7fb; }
.caret { width: 32px; height: 32px; margin-left: auto; fill: none; stroke: #8b8e96; stroke-width: 2; }
.caret.dim { stroke: #5a5f6c; }
.date { gap: 2px; padding-left: 26px; }
.input.date mark { letter-spacing: -.4px; }
.cal { width: 22px; height: 24px; margin-left: 41px; }
.area { height: 160px; align-items: flex-start; padding-top: 16px; line-height: 40px; color: #94a3b8; letter-spacing: -.35px; }
.actions { margin-top: 64px; display: grid; grid-template-columns: 388px 384px; gap: 24px; }
.actions span { height: 80px; line-height: 76px; border-radius: 12px; text-align: center; font-size: 28px; font-weight: 500; letter-spacing: -.3px; border: 2px solid #1e293b; background: #020713; color: #f8fafc; }
.actions .add { background: #4892ec; border-color: #4892ec; color: #0a1222; }

/* dock */
.dock { width: 2708px; height: 126px; margin: 4px 0 0 86px; flex: none; border: 2px solid #4c5148; border-radius: 42px; padding: 17px 3px 0 5px; display: flex;
  background: linear-gradient(90deg, #2a3320, #1f2a28 14%, #28342a 28%, #2b3720 36%, #232422 44%, #2b2119 60%, #262d26 68%, #2a302a 80%, #453324 87%, #22252a 94%, #24262a); }
.dock .app { width: 104px; height: 107px; position: relative; padding: 0 13px; flex: none; }
.dock .app > svg { width: 78px; height: 78px; border-radius: 19px; }
.dock .on::after { content: ""; display: block; width: 8px; height: 8px; margin: 17px auto 0; border-radius: 50%; background: #b0b4aa; }
.split { width: 2px; height: 94px; margin: -3px 20px 0 25px; background: #5b5e5a; flex: none; }
.split.two { margin: -3px 20px 0 24px; }
.dock .trash > svg { width: 78px; height: 96px; margin-top: -8px; border-radius: 0; }
.badge { position: absolute; right: 1px; top: -10px; min-width: 38px; height: 38px; padding: 0 6px; border-radius: 19px; background: #df4b3d; color: #fff; font-size: 23px; font-weight: 400; line-height: 38px; text-align: center; letter-spacing: -1px; }
.badge.wide { right: 0; }
.petals { opacity: .92; }
.mon { font-size: 18px; font-weight: 600; fill: #fff; }
.day { font-size: 47px; font-weight: 300; fill: #222; letter-spacing: -2px; }
.tv { font-size: 36px; font-weight: 500; fill: #fff; letter-spacing: -1px; }
```

FILE: chart.js
```js
// Equity curve: one value per trade, in chart units, drawn with monotone cubics.
const svg = document.getElementById('chart');
const left = 770, right = 2708.5, top_ = 1026, bottom = 1458;
const step = (right - left) / 48;
const ys = [1124.4, 1098, 1097, 1148.7, 1183.6, 1221, 1234, 1240, 1260, 1270, 1262, 1250, 1258, 1270, 1280,
  1276, 1262, 1250, 1244, 1250, 1262, 1270, 1266, 1260, 1255, 1262, 1268, 1257, 1235, 1216.6, 1253, 1252.5,
  1218.7, 1243.7, 1245.7, 1245, 1287.5, 1257, 1235, 1297, 1293.7, 1262.5, 1263.5, 1299.8, 1352, 1375.3,
  1387, 1324, 1297.8];
const px = i => left + i * step;
let out = '';
const line = (x1, y1, x2, y2, extra) =>
  `<line x1="${x1}" y1="${y1}" x2="${x2}" y2="${y2}" stroke-width="2" ${extra}/>`;
const grid = 'stroke="#0b0c0d" stroke-dasharray="6 6"';
const axis = 'stroke="#202123"';
[top_, 1229.6, 1343.7].forEach(y => { out += line(left, y, right, y, grid); });
for (let i = 2; i < 49; i += 2) out += line(px(i), top_, px(i), bottom, grid);
out += line(left, top_, left, bottom, axis) + line(left, bottom, right, bottom, axis);
[[top_, 1034, '$25,709.25'], [1229.6, 1230, '$24,280.98'], [1343.7, 1344, '$23,480.98'], [bottom, 1459, '$22,680.98']]
  .forEach(([y, ty, s]) => {
    out += line(left - 12, y, left, y, axis) + `<text x="754" y="${ty + 9}" text-anchor="end">${s}</text>`;
  });
for (let i = 0; i < 49; i++) {
  if (i > 5 && i < 28 || i > 5 && i % 2) continue;
  out += line(px(i), bottom, px(i), bottom + 12, axis)
    + `<text x="${px(i)}" y="1491" text-anchor="middle">#${i + 1}</text>`;
}
const slope = ys.slice(1).map((y, i) => (y - ys[i]) / step);
const tan = ys.map((_, i) => {
  if (i === 0 || i === ys.length - 1) return null;
  const a = slope[i - 1], b = slope[i];
  return (Math.sign(a) + Math.sign(b)) * Math.min(Math.abs(a), Math.abs(b), 0.5 * Math.abs((a + b) / 2)) || 0;
});
tan[0] = (3 * slope[0] - tan[1]) / 2;
tan[48] = (3 * slope[47] - tan[47]) / 2;
let d = `M${px(0)},${ys[0]}`;
for (let i = 0; i < 48; i++) {
  const h = step / 3;
  d += `C${px(i) + h},${ys[i] + tan[i] * h} ${px(i + 1) - h},${ys[i + 1] - tan[i + 1] * h} ${px(i + 1)},${ys[i + 1]}`;
}
out += `<path d="${d}" fill="none" stroke="#101a2f" stroke-width="4"/>`;
svg.innerHTML = out;
```
